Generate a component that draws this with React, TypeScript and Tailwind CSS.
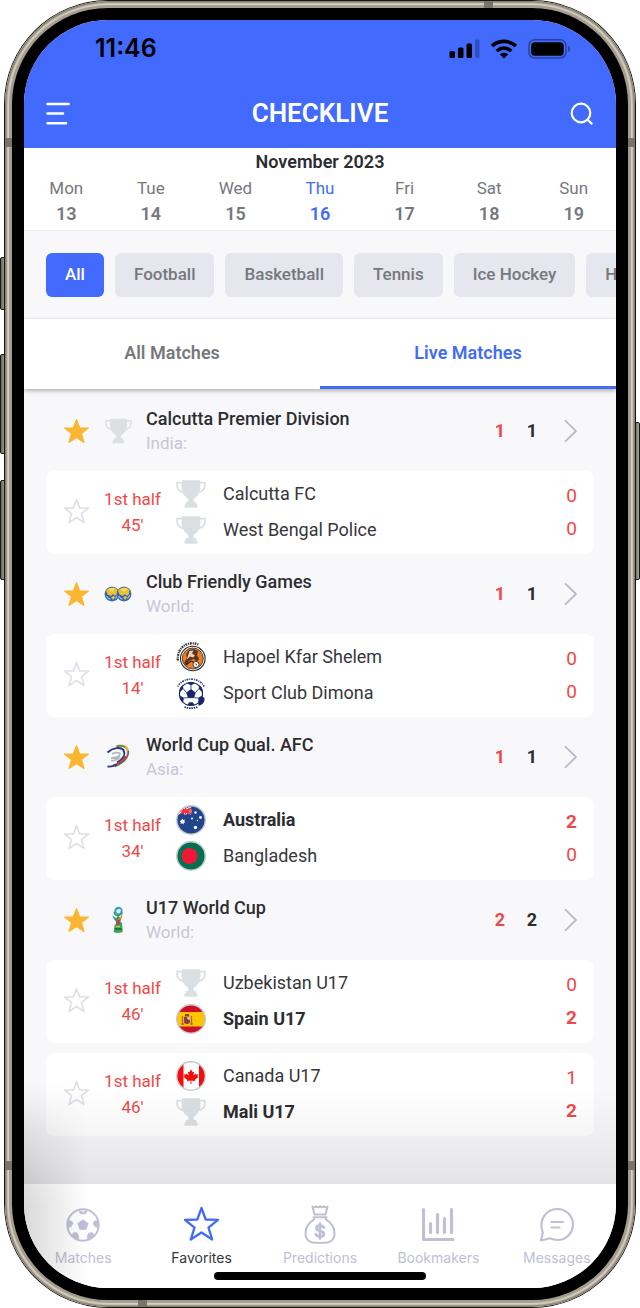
import type { ReactNode } from "react";

type Team = { name: string; score: number; logo: ReactNode; bold?: boolean };
type Match = { minute: string; teams: Team[] };
type League = {
  name: string;
  region: string;
  live: number;
  total: number;
  logo: ReactNode;
  matches: Match[];
};

function Trophy({ className }: { className: string }) {
  return (
    <svg viewBox="0 0 30 28" className={className} aria-hidden="true">
      <path
        d="M5.800 0.300h18.400v1.500h5.500v3.700c0 4.300-2.700 6.500-6.600 7.600-1.300 2.700-3.300 4.800-5.400 5.700v3.200h2.500v2.500h1.300v3.200H8.500v-3.200h1.300v-2.500h2.500v-3.200c-2.100-.9-4.100-3-5.400-5.700C3 12 .3 9.800.3 5.500V1.800h5.500zM2 3.400v2.400c0 2.700 1.500 4.300 4 5.100-.5-2.200-.6-4.700-.4-7.500zM28 3.400h-3.600c.2 2.800.1 5.300-.4 7.500 2.500-.8 4-2.400 4-5.100z"
        fill="#dcdfe1"
        fillRule="evenodd"
      />
    </svg>
  );
}

function Star({ filled }: { filled?: boolean }) {
  return (
    <svg viewBox="0 0 27 27" className="size-[27px]" aria-hidden="true">
      <path
        d="M13.500 1.600 16.700 10h8.700l-6.900 5.600 2.500 8.900-7.500-5-7.500 5 2.500-8.900L1.600 10h8.700z"
        fill={filled ? "#fbb631" : "none"}
        stroke={filled ? "#fbb631" : "#dfe1e8"}
        strokeWidth={filled ? 1.2 : 1.7}
        strokeLinejoin="round"
      />
    </svg>
  );
}

function Chevron() {
  return (
    <svg viewBox="0 0 14 24" className="h-6 w-3.5" aria-hidden="true">
      <path d="M1.500 1.800 12 12 1.500 22.200" fill="none" stroke="#b9bbcb" strokeWidth="1.800" strokeLinecap="round" strokeLinejoin="round" />
    </svg>
  );
}

function Globes() {
  return (
    <svg viewBox="0 0 28 28" className="size-7" aria-hidden="true">
      {[8, 20].map((cx) => (
        <g key={cx} transform={`translate(${cx} 14)`}>
          <circle r="7.300" fill="#2b62ab" />
          <path d="M-6-3.500C-4-7 3-7.500 5.500-4.500L5 0 3 2 1 0-1 2-4.500.5z" fill="#eebf35" />
          <path d="M-3-5 0-6 3-5 1-2.500-2-3z" fill="#f8dc5a" />
          <path d="M-1 3 2 2l1 1.500-2 2.500z" fill="#e2c04a" />
          <path d="M-5.500 2c1.500 2.500 3 3 4 3M3.500 4.500l2.300-3.500" fill="none" stroke="#93c3ef" strokeWidth="1.300" />
          <circle r="7" fill="none" stroke="#587bab" strokeWidth=".6" />
        </g>
      ))}
    </svg>
  );
}

function AfcLogo() {
  return (
    <svg viewBox="0 0 28 28" className="size-7" fill="none" aria-hidden="true">
      <path d="M12 3.500c5-1.500 9-.8 11 2 2 4 .5 9-4 13.500" stroke="#f0a63a" strokeWidth="2.400" />
      <path d="M13 3.200c3-.7 6-.3 8 1" stroke="#3d8a55" strokeWidth="1.600" />
      <path d="M3.500 9.500C9 4.500 16.500 3.800 19.500 7c2.500 5-1 9.500-6.500 12.500" stroke="#27358c" strokeWidth="1.900" />
      <path d="M24.300 8c.5 5-3.300 10-8.300 12.800" stroke="#3156a5" strokeWidth="1.300" />
      <path d="M21.500 13c-2 4.500-6.500 8-12.500 9.800" stroke="#cb3546" strokeWidth="2.200" />
      <path d="M20 17.500c-2.500 3-5.500 5-9 6.200" stroke="#428450" strokeWidth="1.300" />
      <path d="M3.500 23.500c3 .5 6-.3 9-2" stroke="#27358c" strokeWidth="1.800" />
      <path d="M8 11c4-2.200 8-1.500 8 .3s-4 3.500-9 3.800c4 .6 7-.3 9-1.300-2 2.700-5 4-9 4" stroke="#a9bcb9" strokeWidth="1.600" />
    </svg>
  );
}

function U17Cup() {
  return (
    <svg viewBox="0 0 28 28" className="size-7" aria-hidden="true">
      <path d="m10.500 19.500 3-3.500 4.500.5.700 9.500c-2.700 1.300-6.500 1.300-9 0z" fill="#3ba84d" />
      <path d="M8.500 9c.5 4.500 5 6 4.300 11h3.400c.8-4 .5-7-.5-9l-2-1.500-1.200 2.500C11 11.500 9.500 10.500 8.500 9z" fill="#269b82" />
      <path d="m18.500 8-4.500 6-3 6.500 4-3.500 3-5.500z" fill="#f08c2e" />
      <path d="m12.500 15 4-2-1 5-4 2z" fill="#c93b51" />
      <circle cx="14.500" cy="5" r="4.200" fill="#3b9fd4" />
      <path d="M12 5c1-2 3-2.700 5-1.500L16 7l-2.500.5z" fill="#d8f0f5" />
      <path d="M10.300 5.500c-.6 2 1.200 4 3.200 4s4-1 5-3" fill="none" stroke="#2a9b56" strokeWidth="1.300" />
      <path d="M11 23h7" stroke="#1d6e3d" strokeWidth="1.800" />
      <path d="M12 20.500h4" stroke="#a9d449" strokeWidth="1.500" />
    </svg>
  );
}

function Hapoel() {
  return (
    <svg viewBox="0 0 32 32" className="size-8" aria-hidden="true">
      <path d="M2.800 19.500C2 9.500 8 3 16.500 2.300c3-.1 5.500.5 7.300 1.600" fill="none" stroke="#3b3028" strokeWidth="2.300" strokeDasharray="1.800 .9 1.100 .8" />
      <circle cx="17.800" cy="17.500" r="12.300" fill="#fff" stroke="#242424" strokeWidth="1.100" />
      <circle cx="17.800" cy="17.500" r="10.500" fill="#f47c1c" stroke="#242424" strokeWidth=".8" />
      <path d="m11 13 3-4 5-1 4 2-1 4 2 4-2 3-3-3-4 1-4 5-2-2 3-5z" fill="#563624" />
      <path d="m14.500 10 4-.5-1.500 3 3 2-2 2-3-1-3 3 1-4z" fill="#e9d2bd" />
      <path d="m11 24 5-4 4 2" fill="none" stroke="#2b211b" strokeWidth="1.300" />
      <circle cx="21" cy="23.500" r="3" fill="#fff" stroke="#333" strokeWidth=".9" />
      <path d="m20 22.500 2 .5-.8 1.500z" fill="#222" />
    </svg>
  );
}

function Dimona() {
  return (
    <svg viewBox="0 0 32 32" className="size-8" aria-hidden="true">
      <path d="M2.800 9.500C8-.3 24-.3 29.200 9.500" fill="none" stroke="#303b78" strokeWidth="1.700" strokeDasharray="1 .9 1.800 1" />
      <path d="M9.500 30c4 1.500 9 1.500 13 0" fill="none" stroke="#27306b" strokeWidth="1.800" strokeDasharray="1.500 .8" />
      <circle cx="16" cy="17" r="11.500" fill="#fff" stroke="#18266c" strokeWidth="1.200" />
      <path d="m16 12.500 4.300 3.200-1.600 5h-5.400l-1.600-5zM12.500 6.300l3.500 1.500 3.500-1.500-3.500-1zM5 14.500l3-2.800-.7-3C5.600 10.300 4.700 12 4.700 14.500zM27 14.500l-3-2.800.7-3c1.700 1.600 2.600 3.300 2.600 5.800zM8 24.500l.3-3.700-3.200-1.600c.3 2.200 1.200 4 2.900 5.300zM24 24.500l-.3-3.700 3.200-1.600c-.3 2.200-1.200 4-2.900 5.300zM12.800 28l1.500-2.300h3.400l1.500 2.300z" fill="#18266c" stroke="#18266c" strokeWidth=".8" />
      <path d="M16 7.500v5M8 11.500l3.700 4.200M24 11.500l-3.700 4.200M8.500 21l4.800-.3M23.500 21l-4.800-.3" stroke="#18266c" strokeWidth=".8" />
      <path d="M25.500 20.500c3-1 4.500 0 4 2.500-.5 3-3 5.500-6 5.500l-.5-3.500z" fill="#18266c" />
    </svg>
  );
}

function Flag({ children, id }: { children: ReactNode; id: string }) {
  return (
    <svg viewBox="0 0 32 32" className="size-8" aria-hidden="true">
      <clipPath id={id}>
        <circle cx="16" cy="16" r="14" />
      </clipPath>
      <g clipPath={`url(#${id})`}>{children}</g>
      <circle cx="16" cy="16" r="14.300" fill="none" stroke="#c3c9cd" strokeWidth="1.400" />
    </svg>
  );
}

const australia = (
  <Flag id="flag-au">
    <rect width="32" height="32" fill="#20458c" />
    <path d="M3 3l13 7M3 10l13-7" stroke="#fff" strokeWidth="1.500" />
    <path d="M10.500 1v9.500M2 7h14.500" stroke="#fff" strokeWidth="3.200" />
    <path d="M10.500 1v9.500M2 7h14.500M5 4l11 6M5 10l11-6" stroke="#ef3340" strokeWidth="1.700" />
    <path d="m7.500 14.500.8 1.500 1.700-.4-.8 1.500 1.200 1.200-1.700.4-.2 1.800-1.300-1.200-1.700.8.200-1.800-1.200-1.200 1.700-.5z" fill="#fff" />
    <g fill="#fff">
      <circle cx="20.500" cy="8.500" r="1.200" />
      <circle cx="17" cy="14.500" r="1" />
      <circle cx="25.500" cy="13.500" r="1.400" />
      <circle cx="20.500" cy="23.500" r="1.700" />
      <circle cx="22.500" cy="16.500" r=".7" />
    </g>
  </Flag>
);

const bangladesh = (
  <Flag id="flag-bd">
    <rect width="32" height="32" fill="#05704f" />
    <circle cx="14.500" cy="16" r="8" fill="#ee1738" />
  </Flag>
);

const spain = (
  <Flag id="flag-es">
    <rect width="32" height="32" fill="#cd1027" />
    <rect y="9" width="32" height="14.500" fill="#ffc500" />
    <path d="M7.500 13v8.500M16.500 13v8.500" stroke="#a66f3b" strokeWidth="1.300" />
    <path d="M9 14h6v5.500c-1.500 2.300-4.500 2.300-6 0z" fill="#a83a2c" />
    <path d="m9.500 13.500.8-2.500h3.400l.8 2.500z" fill="#8a4624" />
    <path d="M12.200 14H15v2.700h-2.800z" fill="#dfc1b0" />
    <path d="M6.500 21h2.300M15.500 21h2.300" stroke="#776c6c" strokeWidth="1.500" />
    <circle cx="12" cy="17.300" r="1.200" fill="#39538e" />
  </Flag>
);

const canada = (
  <Flag id="flag-ca">
    <rect width="32" height="32" fill="#fff" />
    <path d="M0 0h8.500v32H0zM24 0h8v32h-8z" fill="#f60b0b" />
    <path d="m16 9.300 1.500 2.900 1.600-.8-.7 4 2.200-2 .4 1.200 2.200-.4-.8 2 1.100.7-3.900 3 .4 1.300-3.600-.6.100 3.400h-1l.1-3.400-3.600.6.400-1.300-3.900-3 1.100-.7-.8-2 2.200.4.400-1.200 2.200 2-.7-4 1.600.8z" fill="#f60b0b" />
  </Flag>
);

const teamTrophy = <Trophy className="h-7 w-[30px]" />;

const leagues: League[] = [
  {
    name: "Calcutta Premier Division",
    region: "India:",
    live: 1,
    total: 1,
    logo: <Trophy className="h-[26px] w-[27px]" />,
    matches: [
      {
        minute: "45'",
        teams: [
          { name: "Calcutta FC", score: 0, logo: teamTrophy },
          { name: "West Bengal Police", score: 0, logo: teamTrophy },
        ],
      },
    ],
  },
  {
    name: "Club Friendly Games",
    region: "World:",
    live: 1,
    total: 1,
    logo: <Globes />,
    matches: [
      {
        minute: "14'",
        teams: [
          { name: "Hapoel Kfar Shelem", score: 0, logo: <Hapoel /> },
          { name: "Sport Club Dimona", score: 0, logo: <Dimona /> },
        ],
      },
    ],
  },
  {
    name: "World Cup Qual. AFC",
    region: "Asia:",
    live: 1,
    total: 1,
    logo: <AfcLogo />,
    matches: [
      {
        minute: "34'",
        teams: [
          { name: "Australia", score: 2, logo: australia, bold: true },
          { name: "Bangladesh", score: 0, logo: bangladesh },
        ],
      },
    ],
  },
  {
    name: "U17 World Cup",
    region: "World:",
    live: 2,
    total: 2,
    logo: <U17Cup />,
    matches: [
      {
        minute: "46'",
        teams: [
          { name: "Uzbekistan U17", score: 0, logo: teamTrophy },
          { name: "Spain U17", score: 2, logo: spain, bold: true },
        ],
      },
      {
        minute: "46'",
        teams: [
          { name: "Canada U17", score: 1, logo: canada },
          { name: "Mali U17", score: 2, logo: teamTrophy, bold: true },
        ],
      },
    ],
  },
];

const days = [
  ["Mon", "13"],
  ["Tue", "14"],
  ["Wed", "15"],
  ["Thu", "16"],
  ["Fri", "17"],
  ["Sat", "18"],
  ["Sun", "19"],
];

const sports = ["All", "Football", "Basketball", "Tennis", "Ice Hockey", "Handball"];

function StatusBar() {
  return (
    <div className="flex h-[58px] items-center justify-between pr-[45px] pl-[71px] text-black">
      <span className="font-[Inter,sans-serif] text-[25px] font-semibold">11:46</span>
      <div className="flex items-center gap-2.5">
        <svg viewBox="0 0 31 20" className="h-5 w-[31px]" aria-hidden="true">
          <rect x="0.500" y="12" width="5.500" height="7" rx="1.500" />
          <rect x="9" y="8.500" width="5.500" height="10.500" rx="1.500" />
          <rect x="17.500" y="4.500" width="5.500" height="14.500" rx="1.500" />
          <rect x="26" y="0.500" width="4.500" height="18.500" rx="1.500" opacity=".25" />
        </svg>
        <svg viewBox="0 0 28 20" className="h-5 w-7" fill="none" stroke="#000" strokeWidth="3.600" aria-hidden="true">
          <path d="M2 7c7-6.200 17-6.200 24 0" />
          <path d="M6.700 12c4.500-3.900 10.100-3.900 14.600 0" />
          <path d="m14 19.500-4.300-4.200c2.400-2.200 6.200-2.200 8.600 0z" fill="#000" stroke="none" />
        </svg>
        <svg viewBox="0 0 43 20" className="h-5 w-[43px]" aria-hidden="true">
          <rect x="1" y="0.800" width="37" height="18.200" rx="5.500" fill="none" stroke="#000" strokeOpacity=".38" strokeWidth="1.500" />
          <rect x="3.200" y="3.200" width="32.500" height="13.500" rx="3.500" />
          <path d="M40.200 6.800c2.500 1.300 2.500 5 0 6.300z" opacity=".4" />
        </svg>
      </div>
    </div>
  );
}

function MatchCard({ match }: { match: Match }) {
  return (
    <li className="flex h-[83px] items-center rounded-lg bg-white pr-[17px] pb-0.5 pl-[17px]">
      <button aria-label="Add match to favorites"><Star /></button>
      <p className="w-[85px] text-center text-[17px] leading-[26px] text-[#f04848]">
        1st half
        <br />
        {match.minute}
      </p>
      <div className="flex-1">
        {match.teams.map((t) => (
          <div key={t.name} className="flex h-9 items-center gap-4">
            <span className="flex w-8 justify-center">{t.logo}</span>
            <span className={t.bold ? "text-lg font-bold text-[#2c2d31]" : "text-lg text-[#36373b]"}>{t.name}</span>
          </div>
        ))}
      </div>
      <div className="text-center text-[19px] leading-[33px] text-[#f04848]">
        {match.teams.map((t) => (
          <div key={t.name} className={t.bold ? "font-bold" : ""}>{t.score}</div>
        ))}
      </div>
    </li>
  );
}

function LeagueBlock({ league }: { league: League }) {
  return (
    <section>
      <div className="flex h-20 items-center pr-4 pl-[17px]">
        <button aria-label={`Favorite ${league.name}`}><Star filled /></button>
        <span className="ml-3 flex w-8 justify-center">{league.logo}</span>
        <div className="ml-3 flex-1">
          <h2 className="text-lg leading-6 font-medium text-[#2c2d31]">{league.name}</h2>
          <p className="text-[17px] leading-6 text-[#c5c6da]">{league.region}</p>
        </div>
        <span className="w-8 text-center text-lg font-bold text-[#f04848]">{league.live}</span>
        <span className="w-8 text-center text-lg font-bold text-[#2c2d31]">{league.total}</span>
        <button aria-label={`Open ${league.name}`} className="ml-4"><Chevron /></button>
      </div>
      <ul className="flex flex-col gap-2.5">
        {league.matches.map((m) => <MatchCard key={m.teams[0].name} match={m} />)}
      </ul>
    </section>
  );
}

const navIcon = "size-10";

const nav: { label: string; icon: ReactNode }[] = [
  {
    label: "Matches",
    icon: (
      <svg viewBox="0 0 40 40" className={navIcon} aria-hidden="true">
        <circle cx="20" cy="21" r="15.700" fill="none" stroke="currentColor" strokeWidth="2" />
        <path d="m20 15.700 5.200 3.700-2 6h-6.400l-2-6zM15.200 5.800l4.800 2.700 4.800-2.700-2.300 4h-5zM4.500 16.500l4 .5 1.500 2.500-2 3.200-3.500 1.500zM35.500 16.500l-4 .5-1.500 2.500 2 3.200 3.500 1.500zM8.500 31.300l2.300-2.800 3.400.5 1.600 3-.5 3.800c-2.800-.9-5-2.400-6.800-4.500zM31.500 31.300l-2.300-2.800-3.400.5-1.600 3 .5 3.800c2.800-.9 5-2.400 6.800-4.500z" fill="currentColor" stroke="currentColor" strokeWidth=".7" strokeLinejoin="round" />
      </svg>
    ),
  },
  {
    label: "Favorites",
    icon: (
      <svg viewBox="0 0 40 40" className="size-10 text-[#426cf5]" aria-hidden="true">
        <path d="m19.500 4 4.200 11.500 12.300.3-9.500 7.800 3.700 11.900-10.700-7-10.700 7 3.700-11.900L3 15.800l12.300-.3z" fill="none" stroke="currentColor" strokeWidth="2.300" strokeLinejoin="round" />
      </svg>
    ),
  },
  {
    label: "Predictions",
    icon: (
      <svg viewBox="0 0 40 40" className={navIcon} fill="none" stroke="currentColor" strokeWidth="2" strokeLinecap="round" strokeLinejoin="round" aria-hidden="true">
        <path d="M14.500 10.500 12.500 2.500c1.500 1 2.800 1 3.800-.3 1.200 1.300 2.500 1.300 3.700 0 1.200 1.300 2.500 1.300 3.700 0 1 1.300 2.300 1.300 3.800.3l-2 8zM13.500 13.300h13M14.500 15.200C9 18.500 5.500 23.500 5.500 29.500c0 6 4 9.300 8.500 9.300h12c4.500 0 8.500-3.300 8.500-9.300 0-6-3.500-11-9-14.300" />
        <path d="M23.800 23.700c-.8-1.600-2-2-3.800-2-2.200 0-3.600.9-3.600 2.600 0 3.600 7.600 1.700 7.600 5.400 0 1.900-1.600 2.800-4 2.800-2.100 0-3.500-.7-4.200-2.300M20 19.500v15" strokeWidth="2.700" />
      </svg>
    ),
  },
  {
    label: "Bookmakers",
    icon: (
      <svg viewBox="0 0 40 40" className={navIcon} fill="none" stroke="currentColor" strokeWidth="3" strokeLinecap="round" strokeLinejoin="round" aria-hidden="true">
        <path d="M5.500 5.500v30h29.500" />
        <path d="M12.500 19.500v9M19.500 10.500v18M26.500 14.500v14M33.500 5.500v23" strokeWidth="3.200" />
      </svg>
    ),
  },
  {
    label: "Messages",
    icon: (
      <svg viewBox="0 0 40 40" className={navIcon} fill="none" stroke="currentColor" strokeWidth="2.200" strokeLinecap="round" strokeLinejoin="round" aria-hidden="true">
        <path d="M5.800 28.500C1.500 17 8 5 20.500 5 29 5 36 12 36 20.500S29 36 20.500 36c-3 0-5.200-.5-7.500-1.700L4 36.500z" />
        <path d="M14.500 18h11.500M14.500 23.500h8" />
      </svg>
    ),
  },
];

const sideButton = "absolute w-[6px] border border-[#171713] bg-linear-to-r from-[#69685b] to-[#aaa797]";
const antennaBand = "absolute bg-[#77746a]";

export default function App() {
  return (
    <main className="relative bg-white px-1 font-[Roboto,sans-serif]">
      <span className={`${sideButton} top-[257px] left-0 h-[53px] rounded-l-xs`} />
      <span className={`${sideButton} top-[354px] left-0 h-[100px] rounded-l-xs`} />
      <span className={`${sideButton} top-[480px] left-0 h-[100px] rounded-l-xs`} />
      <span className={`${sideButton} top-[422px] right-0 h-[158px] rounded-r-xs`} />

      <div className="relative rounded-[104px] bg-[#161612] p-px">
        <div className="relative rounded-[103px] bg-[#a39e91] p-[7px] shadow-[inset_0_0_2px_2px_#827d70,inset_0_0_1px_4px_#e2dccb]">
          <span className={`${antennaBand} top-[137px] left-0 h-[9px] w-2`} />
          <span className={`${antennaBand} top-[137px] right-0 h-[9px] w-2`} />
          <span className={`${antennaBand} bottom-[137px] left-0 h-[9px] w-2`} />
          <span className={`${antennaBand} right-0 bottom-[137px] h-[9px] w-2`} />
          <span className={`${antennaBand} top-0 right-[142px] h-2 w-[9px]`} />
          <span className={`${antennaBand} bottom-0 left-[133px] h-2 w-[9px]`} />
          <div className="relative rounded-[96px] bg-black p-3">
            <div className="relative overflow-hidden rounded-[84px] bg-[#f8f8fb]">
              <header className="h-32 bg-[#426afd] text-white">
                <StatusBar />
                <div className="flex h-[70px] items-center justify-between px-[22px]">
                  <button aria-label="Menu" className="w-6">
                    <svg viewBox="0 0 24 24" className="size-6" fill="none" stroke="currentColor" strokeWidth="2.600" strokeLinecap="round" aria-hidden="true">
                      <path d="M1.500 3h21M1.500 12.500h15.500M1.500 22.200H20" />
                    </svg>
                  </button>
                  <h1 className="text-[26px] font-semibold">CHECKLIVE</h1>
                  <button aria-label="Search" className="w-6">
                    <svg viewBox="0 0 24 24" className="size-6" fill="none" stroke="currentColor" strokeWidth="2.200" strokeLinecap="round" aria-hidden="true">
                      <circle cx="11" cy="12" r="9.300" />
                      <path d="m18.200 19.200 3.400 3.400" />
                    </svg>
                  </button>
                </div>
              </header>

              <section className="h-[83px] border-b border-[#ededf0] bg-white pt-0.5 text-center">
                <h2 className="text-lg leading-6 font-semibold text-[#2c2d31]">November 2023</h2>
                <div className="grid grid-cols-7 pt-0.5">
                  {days.map(([day, date]) => (
                    <button key={day} className={day === "Thu" ? "text-[#426cf5]" : "text-[#77787c]"}>
                      <span className="block text-[17px] leading-[25px]">{day}</span>
                      <span className="block text-lg leading-[25px] font-semibold">{date}</span>
                    </button>
                  ))}
                </div>
              </section>

              <div className="flex h-[88px] items-center gap-[11px] overflow-hidden border-b border-[#ededf0] pl-[22px]">
                {sports.map((s) => (
                  <button
                    key={s}
                    className={
                      s === "All"
                        ? "h-11 shrink-0 rounded-md bg-[#426afd] px-[19px] pt-px text-[17px] font-medium text-white"
                        : "h-11 shrink-0 rounded-md bg-[#e5e6ee] px-[19px] pt-px text-[17px] font-medium text-[#77787c]"
                    }
                  >
                    {s}
                  </button>
                ))}
              </div>

              <div className="relative grid h-[70px] grid-cols-2 bg-white text-lg font-semibold shadow-[0_2px_4px_rgba(0,0,0,0.28)]">
                <button className="border-b-3 border-transparent text-[#77787c]">All Matches</button>
                <button className="border-b-3 border-[#426cf5] text-[#426cf5]">Live Matches</button>
              </div>

              <div className="px-[22px] pt-0.5 pb-12">
                {leagues.map((l) => <LeagueBlock key={l.name} league={l} />)}
              </div>

              <nav className="relative grid h-[104px] grid-cols-5 bg-white">
                <div className="pointer-events-none absolute inset-x-0 -top-24 h-24 bg-linear-to-t from-black/8 to-transparent" />
                {nav.map((n) => (
                  <a
                    key={n.label}
                    href="#"
                    className={
                      n.label === "Favorites"
                        ? "flex flex-col items-center pt-5 text-[#36373b]"
                        : "flex flex-col items-center pt-5 text-[#bfc0d5]"
                    }
                  >
                    {n.icon}
                    <span className="mt-1 font-[Inter,sans-serif] text-[14px] leading-5">{n.label}</span>
                  </a>
                ))}
              </nav>
              <div className="pointer-events-none absolute bottom-0 left-0 h-52 w-16 bg-linear-to-r from-black/15 to-transparent mask-t-from-40%" />
              <div className="absolute bottom-2 left-1/2 h-2 w-[212px] -translate-x-1/2 rounded-full bg-black" />
            </div>
          </div>
        </div>
      </div>
    </main>
  );
}
